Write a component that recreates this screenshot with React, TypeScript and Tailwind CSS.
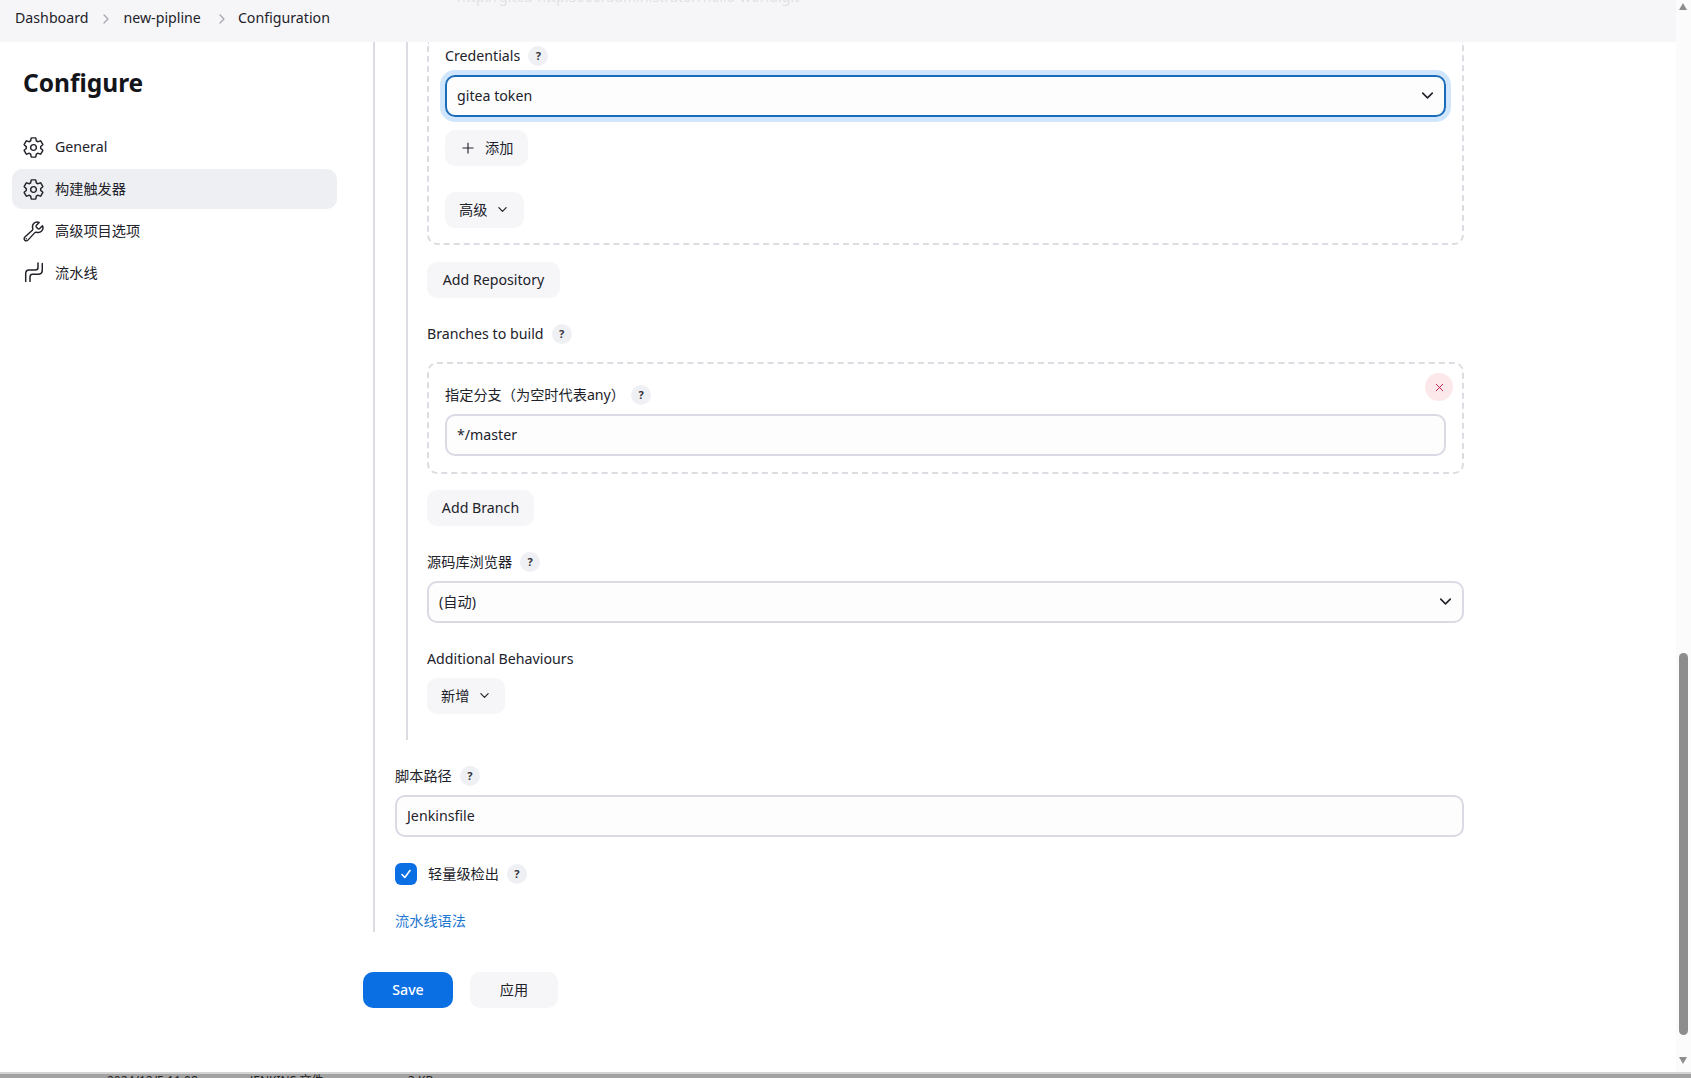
import { IoAddOutline, IoBuildOutline, IoChevronDown, IoChevronForward, IoCloseOutline, IoSettingsOutline } from "react-icons/io5"

const font = { fontFamily: '"Noto Sans", "Noto Sans CJK SC", sans-serif' }

function Help({ className = "ml-[8px]" }: { className?: string }) {
  return (
    <span className={`inline-flex h-[20px] w-[20px] items-center justify-center rounded-full bg-[#eff0f3] text-[11px] font-bold text-[#33333b] ${className}`}>
      ?
    </span>
  )
}

function Label({ text, help = true, helpClass }: { text: string; help?: boolean; helpClass?: string }) {
  return (
    <div className="flex h-[20px] items-center text-[14.2px] text-[#22222a]">
      <span className="pb-[1px]">{text}</span>
      {help && <Help className={helpClass} />}
    </div>
  )
}

function GrayButton({ className, children }: { className: string; children: React.ReactNode }) {
  return (
    <div className={`flex h-[36px] items-center rounded-[10px] bg-[#f6f6f8] pb-[1px] text-[14.2px] text-[#22222a] ${className}`}>
      {children}
    </div>
  )
}

function Field({ value, select }: { value: string; select?: boolean }) {
  return (
    <div className="flex h-[42px] items-center justify-between rounded-[10px] border-2 border-[#d9dae4] bg-[#fdfdfe] pb-[1px] pl-[10px] pr-[8px] text-[14.2px] text-[#22222a]">
      <span>{value}</span>
      {select && <IoChevronDown className="text-[17px] text-[#22222a]" />}
    </div>
  )
}

function NavItem({ icon, label, active }: { icon: React.ReactNode; label: string; active?: boolean }) {
  return (
    <div className={`flex h-[40px] items-center gap-[10px] rounded-[10px] pl-[10px] text-[14.2px] text-[#22222a] ${active ? "bg-[#eeeff3]" : ""}`}>
      {icon}
      <span className="pb-[1px]">{label}</span>
    </div>
  )
}

function PipelineIcon() {
  return (
    <svg viewBox="0 0 20 20" className="ml-[1px] mr-[2px] h-[20px] w-[20px] -translate-y-[1px] text-[#22222a]" fill="none" stroke="currentColor" strokeWidth="1.5" strokeLinecap="round" strokeLinejoin="round">
      <path d="M2.700 19.500V11.500Q2.700 8 6 8H12.500Q15 8 15 5.500V1" />
      <path d="M7 19.500V15Q7 12.300 9.500 12.300H15Q19.300 12.300 19.300 8V1.500" />
    </svg>
  )
}

export default function App() {
  return (
    <div style={font} className="relative flex h-[1078px] w-[1691px] overflow-hidden bg-white">
      <div className="flex w-[1676px] flex-col">
        <header className="relative flex h-[42px] shrink-0 items-start overflow-hidden bg-[#f6f6f8] pl-[15px] pt-[7px] text-[14.2px] text-[#22222a]">
          <span>Dashboard</span>
          <IoChevronForward className="ml-[11px] mr-[10px] mt-[5px] text-[14px] text-[#a6a6b0]" />
          <span>new-pipline</span>
          <IoChevronForward className="ml-[14px] mr-[9px] mt-[5px] text-[14px] text-[#a6a6b0]" />
          <span>Configuration</span>
          <span className="absolute left-[457px] top-[-14px] text-[14.2px] text-[#e0e0e5] blur-[0.5px]">http://gitea-http:3000/administrator/hello-world.git</span>
        </header>

        <div className="flex flex-1">
          <aside className="w-[363px] shrink-0 pl-[12px] pr-[26px]">
            <h1 className="mb-[27px] mt-[24px] pl-[11px] text-[24.500px] font-bold leading-[34px] text-[#14141b]">Configure</h1>
            <nav className="flex flex-col gap-[2px]">
              <NavItem icon={<IoSettingsOutline className="text-[23px] text-[#22222a]" />} label="General" />
              <NavItem active icon={<IoSettingsOutline className="text-[23px] text-[#22222a]" />} label="构建触发器" />
              <NavItem icon={<IoBuildOutline className="text-[23px] text-[#22222a]" />} label="高级项目选项" />
              <NavItem icon={<PipelineIcon />} label="流水线" />
            </nav>
          </aside>

          <main className="w-[1101px]">
            <div className="ml-[10px] h-[890px] border-l-2 border-[#dcdce2] pl-[20px]">
              <div className="ml-[11px] h-[698px] border-l-2 border-[#dcdce2] pl-[19px]">
                <div className="h-[203px] rounded-b-[10px] border-2 border-t-0 border-dashed border-[#dcdce2] pl-[16px] pr-[16px] pt-[4px]">
                  <Label text="Credentials" />
                  <div className="mt-[9px] rounded-[10px] shadow-[0_0_0_5px_#cfe6fd]">
                    <div className="flex h-[42px] items-center justify-between rounded-[10px] border-2 border-[#1b6cb8] bg-[#fdfdfe] pb-[1px] pl-[10px] pr-[8px] text-[14.2px] text-[#22222a]">
                      <span>gitea token</span>
                      <IoChevronDown className="text-[17px] text-[#22222a]" />
                    </div>
                  </div>
                  <GrayButton className="mt-[13px] w-[83px] pl-[14px]">
                    <IoAddOutline className="mr-[8px] text-[18px]" />
                    添加
                  </GrayButton>
                  <GrayButton className="mt-[26px] w-[79px] pl-[14px]">
                    高级
                    <IoChevronDown className="ml-[9px] text-[13px]" />
                  </GrayButton>
                </div>

                <GrayButton className="mt-[17px] w-[133px] justify-center">Add Repository</GrayButton>

                <div className="mt-[26px]">
                  <Label text="Branches to build" />
                </div>
                <div className="relative mt-[18px] h-[112px] rounded-[10px] border-2 border-dashed border-[#dcdce2] pl-[16px] pr-[16px] pt-[21px]">
                  <button className="absolute right-[9px] top-[9px] flex h-[28px] w-[28px] items-center justify-center rounded-full bg-[#fce8ea] text-[#c2174f]">
                    <IoCloseOutline className="text-[15px]" />
                  </button>
                  <Label text="指定分支（为空时代表any）" helpClass="ml-[6px]" />
                  <div className="mt-[9px]">
                    <Field value="*/master" />
                  </div>
                </div>

                <GrayButton className="mt-[16px] w-[107px] justify-center">Add Branch</GrayButton>

                <div className="mt-[26px]">
                  <Label text="源码库浏览器" />
                </div>
                <div className="mt-[9px]">
                  <Field value="(自动)" select />
                </div>

                <div className="mt-[26px]">
                  <Label text="Additional Behaviours" help={false} />
                </div>
                <GrayButton className="mt-[9px] w-[78px] pl-[14px]">
                  新增
                  <IoChevronDown className="ml-[9px] text-[13px]" />
                </GrayButton>
              </div>

              <div className="mt-[26px]">
                <Label text="脚本路径" />
              </div>
              <div className="mt-[9px] w-[1069px]">
                <Field value="Jenkinsfile" />
              </div>

              <div className="mt-[26px] flex h-[22px] items-center">
                <span className="mr-[11px] flex h-[22px] w-[22px] items-center justify-center rounded-[6px] bg-[#0b6fe4]">
                  <svg viewBox="0 0 12 12" className="h-[12px] w-[12px]" fill="none" stroke="white" strokeWidth="1.6" strokeLinecap="round" strokeLinejoin="round">
                    <path d="M2 6.500 4.800 9.500 10 2.500" />
                  </svg>
                </span>
                <Label text="轻量级检出" />
              </div>

              <a className="mt-[26px] block pb-[1px] text-[14.2px] leading-[20px] text-[#1f78d1]">流水线语法</a>
            </div>

            <div className="mt-[40px] flex gap-[17px]">
              <div className="flex h-[36px] w-[90px] items-center justify-center rounded-[10px] bg-[#0b6fe4] pb-[1px] text-[14.2px] font-medium text-white">Save</div>
              <GrayButton className="w-[88px] justify-center">应用</GrayButton>
            </div>
          </main>
        </div>
      </div>

      <div className="relative w-[15px] shrink-0 bg-[#fbfbfc]">
        <div className="absolute left-[3px] top-[3px] h-0 w-0 border-x-[4.500px] border-b-[7px] border-x-transparent border-b-[#8d8d8d]" />
        <div className="absolute left-[3px] top-[653px] h-[382px] w-[9px] rounded-full bg-[#8d8d8d]" />
        <div className="absolute left-[3px] top-[1057px] h-0 w-0 border-x-[4.500px] border-t-[7px] border-x-transparent border-t-[#8d8d8d]" />
      </div>

      <div className="absolute left-0 top-[1072px] flex h-[6px] w-[1691px] items-start overflow-hidden border-t-2 border-[#d4d4d4] bg-[#a2a2a2] pl-[107px] text-[12px] leading-[14px] text-[#222222]">
        <span className="w-[143px]">2024/12/5 11:08</span>
        <span className="w-[158px]">JENKINS 文件</span>
        <span>3 KB</span>
      </div>
    </div>
  )
}
